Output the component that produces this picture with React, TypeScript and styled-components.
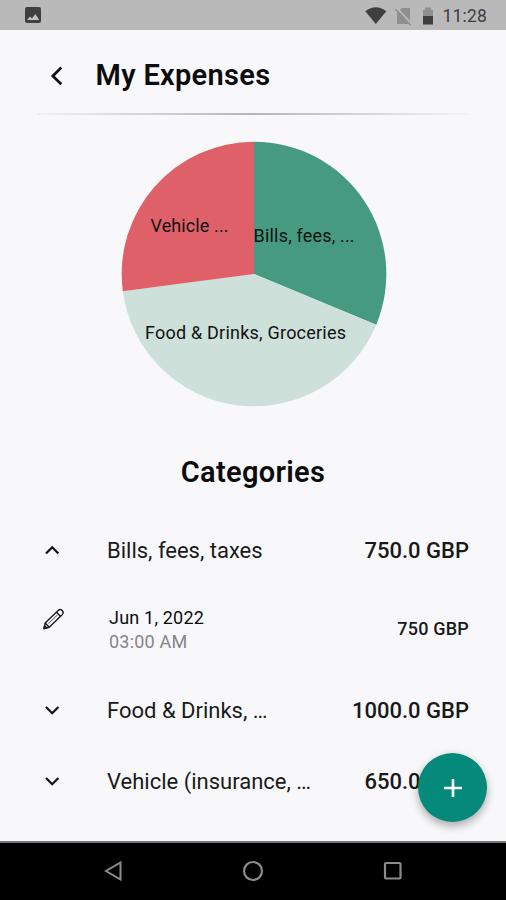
import React from "react";
import styled, { createGlobalStyle } from "styled-components";

const GlobalStyle = createGlobalStyle`
  * { box-sizing: border-box; }
  body { margin: 0; background: #f8f8fa; }
`;

const Screen = styled.div`
  position: relative;
  display: flex;
  flex-direction: column;
  width: 506px;
  height: 900px;
  overflow: hidden;
  background: #f8f8fa;
  color: #0c0c0d;
  font-family: Roboto, "Liberation Sans", sans-serif;
`;

const StatusBar = styled.div`
  display: flex;
  flex: none;
  align-items: center;
  justify-content: space-between;
  height: 30px;
  padding: 0 19px 0 24px;
  background: #b9b9ba;
`;

const StatusIcons = styled.div`
  display: flex;
  align-items: center;
`;

const Clock = styled.span`
  padding-top: 2px;
  font-size: 17.5px;
  line-height: 20px;
  font-weight: 450;
  letter-spacing: 0.2px;
  color: #3e3e3f;
`;

const Header = styled.header`
  display: flex;
  flex: none;
  align-items: center;
  height: 83px;
  padding: 8px 0 0 44px;
`;

const BackButton = styled.button`
  display: flex;
  padding: 0;
  border: 0;
  background: none;
  color: #111;
`;

const Title = styled.h1`
  margin: 0 0 2px 27.5px;
  font-size: 29px;
  line-height: 34px;
  font-weight: 600;
  letter-spacing: 0.3px;
`;

const Divider = styled.div`
  flex: none;
  height: 2px;
  margin: 0 36px 0 37px;
  background: linear-gradient(90deg, #f1f1f3, #b5b6b7 50%, #f4f4f6);
`;

const ChartArea = styled.div`
  display: flex;
  flex: none;
  justify-content: center;
  height: 329px;
  padding: 25.5px 0 0 1px;
`;

const SliceLabel = styled.text`
  font-family: Roboto, "Liberation Sans", sans-serif;
  font-size: 18px;
  fill: #101312;
`;

const SectionTitle = styled.h2`
  flex: none;
  margin: 0;
  padding-top: 11px;
  height: 70px;
  font-size: 29px;
  line-height: 34px;
  font-weight: 600;
  letter-spacing: 0.3px;
  text-align: center;
`;

const Row = styled.div<{ $height: number }>`
  display: flex;
  flex: none;
  align-items: center;
  height: ${(p) => p.$height}px;
  padding: 0 37px 0 40px;
`;

const RowIcon = styled.div`
  display: flex;
  width: 67px;
  flex: none;
`;

const Category = styled.span`
  flex: 1;
  padding-top: 1px;
  font-size: 22px;
  line-height: 28px;
  color: #1a1a1b;
`;

const Amount = styled.span<{ $small?: boolean }>`
  padding-top: ${(p) => (p.$small ? 0 : 1)}px;
  padding-bottom: ${(p) => (p.$small ? 2 : 0)}px;
  font-size: ${(p) => (p.$small ? 18 : 22)}px;
  line-height: 24px;
  font-weight: 500;
  letter-spacing: ${(p) => (p.$small ? 0.2 : 0)}px;
  color: #19191a;
  white-space: nowrap;
`;

const When = styled.div`
  display: flex;
  flex: 1;
  flex-direction: column;
  padding-left: 2px;
  font-size: 18px;
  line-height: 24px;
  letter-spacing: 0.2px;
`;

const Time = styled.span`
  color: #858587;
`;

const PencilHolder = styled(RowIcon)`
  padding-bottom: 23px;
`;

const AddButton = styled.button`
  position: absolute;
  left: 418px;
  top: 753px;
  display: flex;
  align-items: center;
  justify-content: center;
  width: 69px;
  height: 69px;
  padding: 0;
  border: 0;
  border-radius: 50%;
  background: #04897a;
  box-shadow: 0 5px 8px rgba(0, 0, 0, 0.24), 0 1px 10px rgba(0, 0, 0, 0.1);
`;

const NavBar = styled.nav`
  display: flex;
  flex: none;
  align-items: center;
  justify-content: space-between;
  height: 59px;
  margin-top: auto;
  padding: 0 103px 2px 103px;
  border-top: 2px solid #757576;
  background: #000;
`;

const Chevron = ({ up = false }: { up?: boolean }) => (
  <svg width="24" height="24" viewBox="0 0 24 24" fill="none" stroke="#151515" strokeWidth="2.3">
    <path d={up ? "M6 15.5l6.2-6.2 6.2 6.2" : "M6 9l6.2 6.2L18.4 9"} />
  </svg>
);

const RADIUS = 132.3;
const slices = [
  { value: 750, color: "#459a80" },
  { value: 1000, color: "#cee0da" },
  { value: 650, color: "#df6069" },
];
const total = slices.reduce((sum, s) => sum + s.value, 0);

const point = (fraction: number) => {
  const angle = fraction * Math.PI * 2;
  return `${133 + RADIUS * Math.sin(angle)} ${133 - RADIUS * Math.cos(angle)}`;
};

const PieChart = () => {
  let start = 0;
  return (
    <svg width="266" height="266" viewBox="0 0 266 266">
      {slices.map((s) => {
        const end = start + s.value / total;
        const d = `M133 133L${point(start)}A${RADIUS} ${RADIUS} 0 0 1 ${point(end)}Z`;
        start = end;
        return <path key={s.color} d={d} fill={s.color} />;
      })}
      <SliceLabel x="29.5" y="91" textLength="78">Vehicle ...</SliceLabel>
      <SliceLabel x="132.6" y="101" textLength="101">Bills, fees, ...</SliceLabel>
      <SliceLabel x="24" y="198" textLength="201">Food &amp; Drinks, Groceries</SliceLabel>
    </svg>
  );
};

export default function App() {
  return (
    <>
      <GlobalStyle />
      <Screen>
        <StatusBar>
          <svg width="18" height="18" viewBox="0 0 18 18">
            <rect x="1" y="1" width="16" height="16" rx="2" fill="#3f3f40" />
            <path d="M3 14l3-3.6 2 2 3.4-4.4 3.8 6z" fill="#c0c0c1" />
          </svg>
          <StatusIcons>
            <svg width="82" height="22" viewBox="0 0 82 22">
              <path d="M15.8 20L5.3 7.2Q15.8 -.5 26.3 7.2Z" fill="#3f3f40" />
              <path d="M37 8.5V20H50V7V4H42Z" fill="#8f8f90" />
              <path d="M36.5 4L51.5 19.5" stroke="#b9b9ba" strokeWidth="1.8" />
              <path d="M35.3 5.3L50.5 21" stroke="#8f8f90" strokeWidth="1.6" />
              <path d="M63 6h2V3.5h6V6h2v7H63z" fill="#8f8f90" />
              <path d="M63 12h10v8.5H63z" fill="#3f3f40" />
            </svg>
            <Clock>11:28</Clock>
          </StatusIcons>
        </StatusBar>
        <Header>
          <BackButton aria-label="Back">
            <svg width="24" height="24" viewBox="0 0 24 24" fill="none" stroke="#111" strokeWidth="2.7">
              <path d="M17.3 3.5L8.8 12l8.5 8.2" />
            </svg>
          </BackButton>
          <Title>My Expenses</Title>
        </Header>
        <Divider />
        <ChartArea>
          <PieChart />
        </ChartArea>
        <SectionTitle>Categories</SectionTitle>
        <Row $height={72}>
          <RowIcon><Chevron up /></RowIcon>
          <Category>Bills, fees, taxes</Category>
          <Amount>750.0 GBP</Amount>
        </Row>
        <Row $height={88}>
          <PencilHolder>
            <svg width="28" height="26" viewBox="0 0 28 26" fill="none" stroke="#1b1b1c" strokeWidth="1.4" strokeLinejoin="round">
              <path d="M4 22.5L5.2 17L18.5 4.2Q20.3 2.8 22.2 4.6Q24 6.5 22.4 8.4L9.2 21.2Z" />
              <path d="M16.4 6.2L20.4 10.3M5.2 17L9.2 21.2" />
              <path d="M17.4 9L8.4 17.7" strokeWidth="0.8" />
              <path d="M4 22.5L4.6 19.8L6.8 21.9Z" fill="#1b1b1c" />
            </svg>
          </PencilHolder>
          <When>
            <span>Jun 1, 2022</span>
            <Time>03:00 AM</Time>
          </When>
          <Amount $small>750 GBP</Amount>
        </Row>
        <Row $height={72}>
          <RowIcon><Chevron /></RowIcon>
          <Category>Food &amp; Drinks, …</Category>
          <Amount>1000.0 GBP</Amount>
        </Row>
        <Row $height={70}>
          <RowIcon><Chevron /></RowIcon>
          <Category>Vehicle (insurance, …</Category>
          <Amount>650.0 GBP</Amount>
        </Row>
        <NavBar>
          <svg width="20" height="22" viewBox="0 0 20 22" fill="none" stroke="#8b8b8b" strokeWidth="2">
            <path d="M17.5 2.5v17L3 11z" />
          </svg>
          <svg width="22" height="22" viewBox="0 0 22 22" fill="none" stroke="#8b8b8b" strokeWidth="2.2">
            <circle cx="11" cy="11" r="9" />
          </svg>
          <svg width="20" height="20" viewBox="0 0 20 20" fill="none" stroke="#8b8b8b" strokeWidth="2.2">
            <rect x="2" y="2" width="15.5" height="15.5" rx="1" />
          </svg>
        </NavBar>
        <AddButton aria-label="Add expense">
          <svg width="20" height="20" viewBox="0 0 20 20" stroke="#fff" strokeWidth="2.6">
            <path d="M10 1v18M1 10h18" />
          </svg>
        </AddButton>
      </Screen>
    </>
  );
}
